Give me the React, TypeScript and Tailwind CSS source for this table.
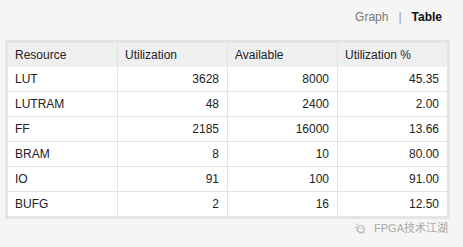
const rows = [
  ['LUT', '3628', '8000', '45.35'],
  ['LUTRAM', '48', '2400', '2.00'],
  ['FF', '2185', '16000', '13.66'],
  ['BRAM', '8', '10', '80.00'],
  ['IO', '91', '100', '91.00'],
  ['BUFG', '2', '16', '12.50'],
]

const heads = ['Resource', 'Utilization', 'Available', 'Utilization %']

export default function App() {
  return (
    <div className="w-[463px] h-[247px] bg-[#f5f5f5] font-['Liberation_Sans',Arial,sans-serif] text-[12px] text-[#222] overflow-hidden">
      <div className="flex justify-end items-center h-[32px] pr-[21px] pt-[1px]">
        <span className="text-[#777]">Graph</span>
        <span className="text-[#999] mx-[10px]">|</span>
        <span className="font-bold text-[#111]">Table</span>
      </div>
      <div className="ml-[5px] mt-[8px] w-[445px] border-[3px] border-[#e4e4e4]">
        <div className="flex h-[24px] bg-[#efefef]">
          {heads.map((h, i) => (
            <div
              key={h}
              className={`flex items-center pl-[7px] ${i < 3 ? 'w-[110px] border-r border-[#e2e2e2]' : 'w-[109px]'}`}
            >
              {h}
            </div>
          ))}
        </div>
        {rows.map((r, ri) => (
          <div key={r[0]} className={`flex bg-white ${ri > 0 ? 'h-[25px] border-t border-[#e4e4e4]' : 'h-[24px]'}`}>
            {r.map((c, i) => (
              <div
                key={i}
                className={`flex items-center ${i === 0 ? 'pl-[7px]' : 'justify-end pr-[8px]'} ${i < 3 ? 'w-[110px] border-r border-[#e4e4e4]' : 'w-[109px]'}`}
              >
                {c}
              </div>
            ))}
          </div>
        ))}
      </div>
      <div className="flex justify-end items-center mt-[1px] pr-[15px] text-[#a9a9a9] text-[11px] font-['Liberation_Sans','Noto_Sans_CJK_SC',sans-serif]">
        <svg width="16" height="13" viewBox="0 0 16 13" className="mr-[6px]">
          <path d="M6 1.5 A5.5 5.5 0 1 0 13 10" fill="none" stroke="#aaa" strokeWidth="1" strokeDasharray="2 1.5" />
          <circle cx="9" cy="7" r="3.5" fill="none" stroke="#aaa" strokeWidth="1" />
          <path d="M8 6.5h0.1M10 6.5h0.1" stroke="#aaa" strokeWidth="1" strokeLinecap="round" />
        </svg>
        <span>FPGA技术江湖</span>
      </div>
    </div>
  )
}
